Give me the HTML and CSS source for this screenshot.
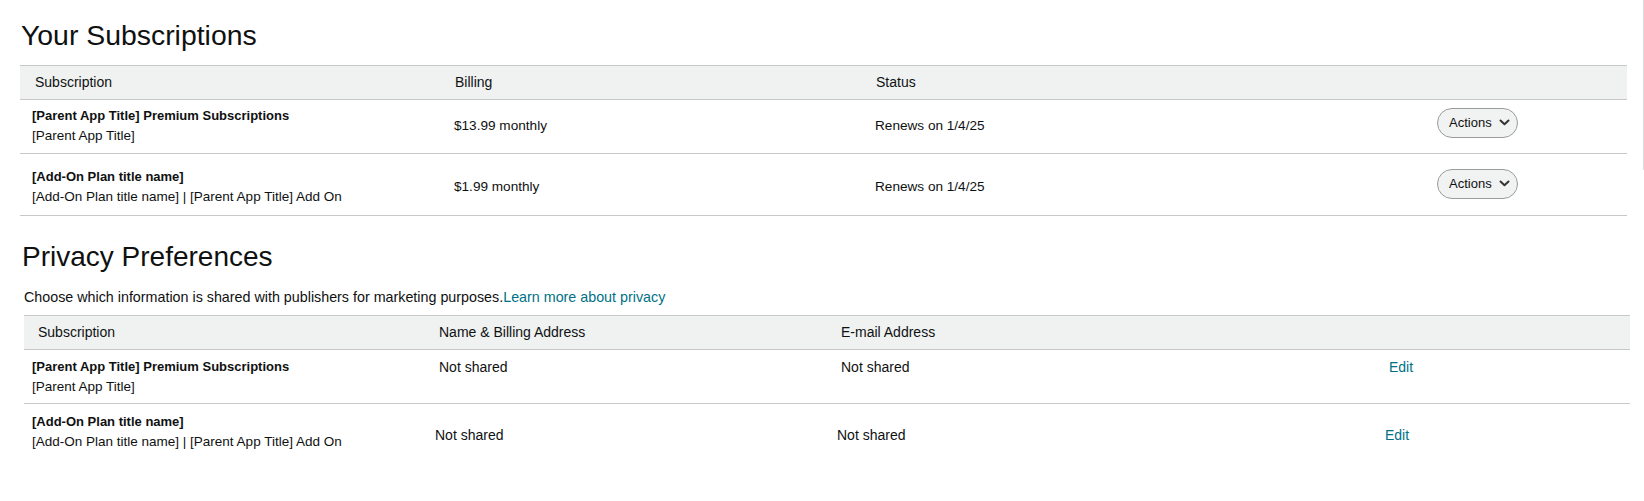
FILE: index.html
```html
<!DOCTYPE html>
<html lang="en">
<head>
<meta charset="utf-8">
<title>Your Subscriptions</title>
<link rel="stylesheet" href="styles.css">
</head>
<body>
<div class="page">
  <div class="main">
    <section class="section section-subs">
      <h1 class="title title-subs">Your Subscriptions</h1>
      <table class="tbl tbl-subs">
        <colgroup>
          <col class="s-c1"><col class="s-c2"><col class="s-c3"><col class="s-c4">
        </colgroup>
        <thead>
          <tr><th class="th-first">Subscription</th><th>Billing</th><th>Status</th><th></th></tr>
        </thead>
        <tbody>
          <tr class="row row-1">
            <td class="name"><div class="name-main">[Parent App Title] Premium Subscriptions</div><div class="name-sub">[Parent App Title]</div></td>
            <td class="val">$13.99 monthly</td>
            <td class="val">Renews on 1/4/25</td>
            <td class="act"><button class="actions" type="button"><span>Actions</span><svg class="chev" width="11" height="7" viewBox="0 0 11 7"><polyline points="1.5,1.5 5.5,5.2 9.5,1.5" fill="none" stroke="#333" stroke-width="2" stroke-linecap="round" stroke-linejoin="round"/></svg></button></td>
          </tr>
          <tr class="row row-2">
            <td class="name"><div class="name-main">[Add-On Plan title name]</div><div class="name-sub">[Add-On Plan title name] | [Parent App Title] Add On</div></td>
            <td class="val">$1.99 monthly</td>
            <td class="val">Renews on 1/4/25</td>
            <td class="act"><button class="actions" type="button"><span>Actions</span><svg class="chev" width="11" height="7" viewBox="0 0 11 7"><polyline points="1.5,1.5 5.5,5.2 9.5,1.5" fill="none" stroke="#333" stroke-width="2" stroke-linecap="round" stroke-linejoin="round"/></svg></button></td>
          </tr>
        </tbody>
      </table>
    </section>

    <section class="section section-privacy">
      <h2 class="title title-privacy">Privacy Preferences</h2>
      <p class="desc">Choose which information is shared with publishers for marketing purposes.<a class="link" href="#">Learn more about privacy</a></p>
      <table class="tbl tbl-privacy">
        <colgroup>
          <col class="p-c1"><col class="p-c2"><col class="p-c3"><col class="p-c4">
        </colgroup>
        <thead>
          <tr><th class="th-first">Subscription</th><th>Name &amp; Billing Address</th><th>E-mail Address</th><th></th></tr>
        </thead>
        <tbody>
          <tr class="prow prow-1">
            <td class="name"><div class="name-main">[Parent App Title] Premium Subscriptions</div><div class="name-sub">[Parent App Title]</div></td>
            <td class="pval">Not shared</td>
            <td class="pval">Not shared</td>
            <td class="pval"><a class="link" href="#">Edit</a></td>
          </tr>
          <tr class="prow prow-2">
            <td class="name"><div class="name-main">[Add-On Plan title name]</div><div class="name-sub">[Add-On Plan title name] | [Parent App Title] Add On</div></td>
            <td class="pval">Not shared</td>
            <td class="pval">Not shared</td>
            <td class="pval"><a class="link" href="#">Edit</a></td>
          </tr>
        </tbody>
      </table>
    </section>
  </div>
  <div class="scroll-edge"></div>
</div>
</body>
</html>
```

FILE: styles.css
```css
* { box-sizing: border-box; }

html, body {
  margin: 0;
  padding: 0;
  background: #ffffff;
}

body {
  font-family: "Liberation Sans", Arial, sans-serif;
  color: #0f1111;
  font-size: 14px;
  line-height: 20px;
}

.page {
  display: flex;
  align-items: flex-start;
  width: 1644px;
}

.main {
  flex: 1;
  padding-left: 20px;
}

.scroll-edge {
  width: 1px;
  height: 170px;
  background: #dcdcdc;
}

.title {
  margin: 0;
  font-size: 28px;
  line-height: 32px;
  font-weight: 400;
  color: #0f1111;
}

.title-subs {
  margin-top: 19px;
  padding-left: 1px;
  font-size: 28.4px;
}

.title-privacy {
  margin-top: 25px;
  padding-left: 2px;
}

.desc {
  margin: 15px 0 0;
  padding-left: 4px;
  font-size: 14.3px;
  line-height: 18px;
  color: #0f1111;
}

.link {
  color: #007185;
  text-decoration: none;
}

.tbl {
  border-collapse: separate;
  border-spacing: 0;
  table-layout: fixed;
}

.tbl th {
  background: #f0f2f2;
  border-top: 1px solid #c8c8c8;
  border-bottom: 1px solid #c8c8c8;
  font-weight: 400;
  font-size: 14px;
  line-height: 20px;
  text-align: left;
  padding: 6px 0 7px 15px;
  color: #0f1111;
}

.tbl td {
  vertical-align: middle;
  text-align: left;
}

/* subscriptions table */
.tbl-subs {
  width: 1607px;
  margin-top: 14px;
}

.s-c1 { width: 420px; }
.s-c2 { width: 421px; }
.s-c3 { width: 564px; }
.s-c4 { width: 202px; }

.tbl-subs td {
  border-bottom: 1px solid #c8c8c8;
}

.row-1 td {
  padding-top: 6px;
  padding-bottom: 7px;
}

.row-2 td {
  padding-top: 13px;
  padding-bottom: 8px;
}

.tbl-subs td.name {
  padding-left: 12px;
}

.tbl-subs td.val {
  padding-left: 14px;
  font-size: 13.6px;
  color: #0f1111;
}

.tbl-subs td.act {
  padding-left: 12px;
}

.name-main {
  font-weight: 700;
  font-size: 13px;
  line-height: 20px;
  white-space: nowrap;
}

.name-sub {
  font-size: 13.5px;
  line-height: 20px;
  white-space: nowrap;
}

.actions {
  display: flex;
  align-items: center;
  gap: 7px;
  height: 30px;
  width: 81px;
  margin: 0 0 7px 0;
  padding: 0 7px 0 11px;
  border: 1px solid #9a9c9c;
  border-radius: 15px;
  background: #f1f2f2;
  font-family: "Liberation Sans", Arial, sans-serif;
  font-size: 13px;
  line-height: 16px;
  color: #0f1111;
  cursor: pointer;
}

.chev {
  display: block;
  flex: none;
}

/* privacy table */
.tbl-privacy {
  width: 1606px;
  margin-top: 9px;
  margin-left: 4px;
}

.p-c1 { width: 401px; }
.p-c2 { width: 402px; }
.p-c3 { width: 548px; }
.p-c4 { width: 255px; }

.tbl-privacy th {
  padding-left: 14px;
}

.tbl-privacy td.name {
  padding-left: 8px;
}

.tbl-privacy td.pval {
  font-size: 14px;
  color: #0f1111;
}

.prow-1 td {
  vertical-align: top;
  padding-top: 7px;
  padding-bottom: 6px;
  border-bottom: 1px solid #c8c8c8;
}

.prow-1 td.name {
  padding-top: 7px;
}

.prow-1 td.pval {
  padding-left: 14px;
}

.prow-2 td {
  padding-top: 8px;
  padding-bottom: 8px;
}

.prow-2 td.pval {
  padding-left: 10px;
  padding-top: 13px;
  vertical-align: middle;
}
```
